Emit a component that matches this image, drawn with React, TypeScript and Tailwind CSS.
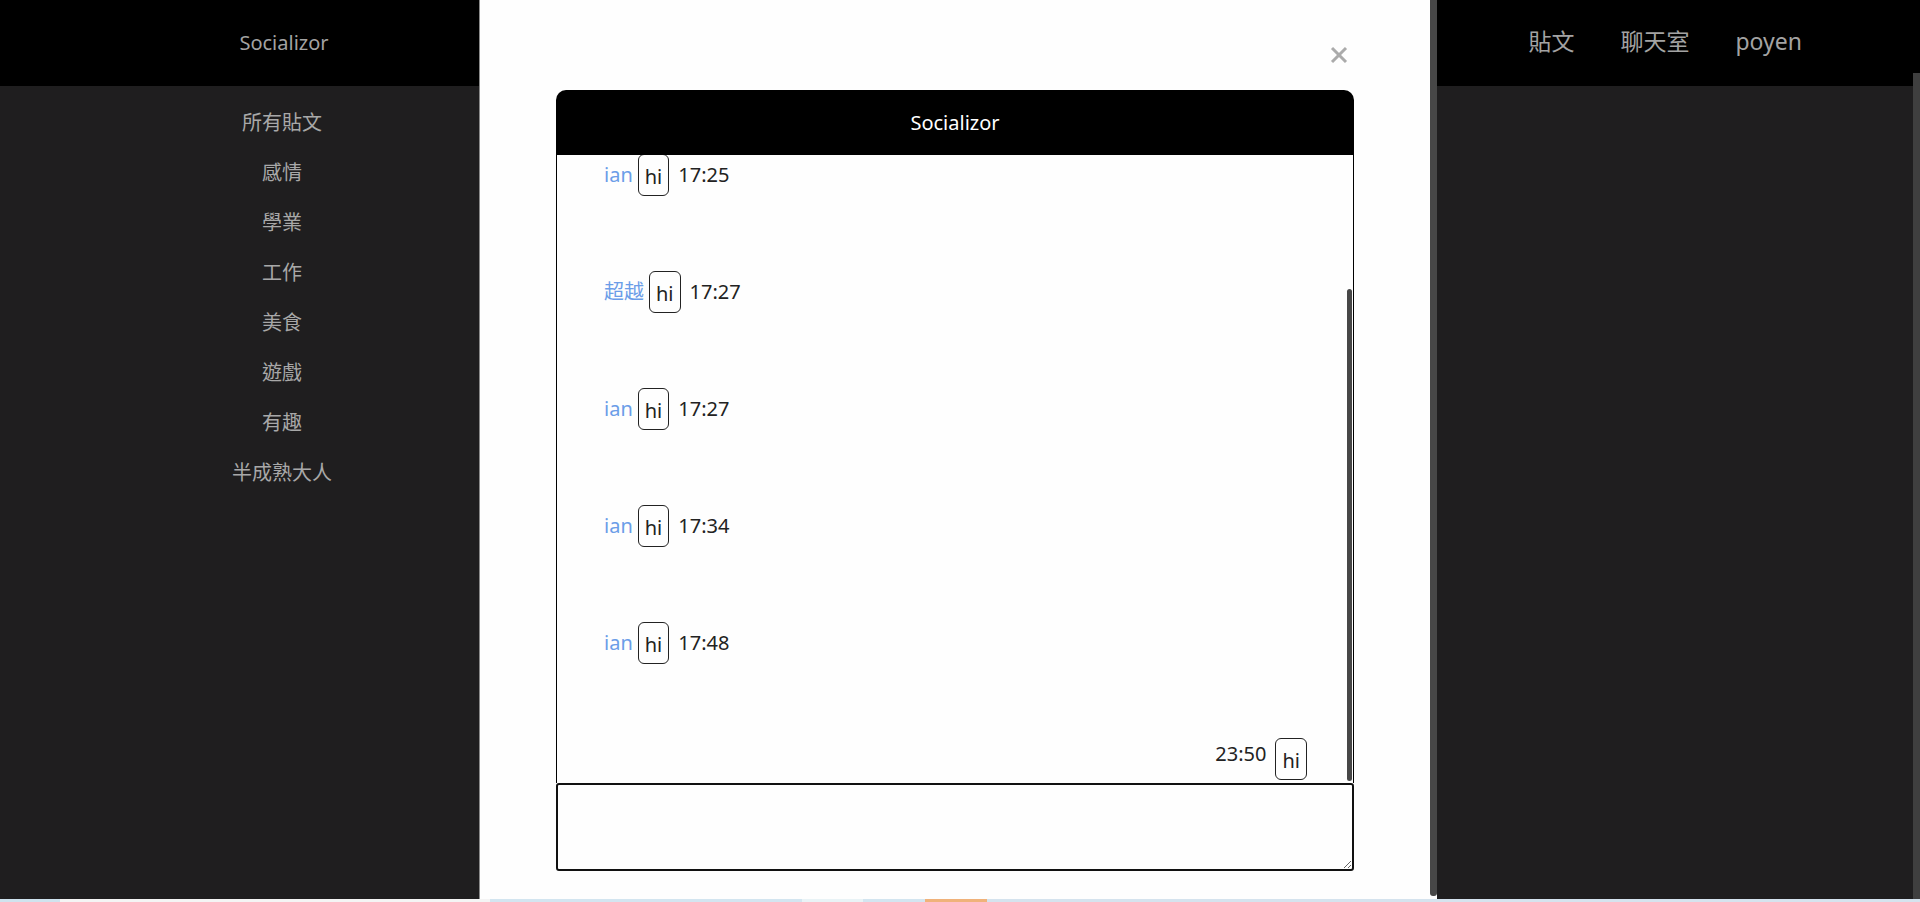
import React from 'react';

const CATEGORIES = ['所有貼文', '感情', '學業', '工作', '美食', '遊戲', '有趣', '半成熟大人'];

const MESSAGES = [
  { id: 1, name: 'ian', text: 'hi', time: '17:25' },
  { id: 2, name: '超越', text: 'hi', time: '17:27' },
  { id: 3, name: 'ian', text: 'hi', time: '17:27' },
  { id: 4, name: 'ian', text: 'hi', time: '17:34' },
  { id: 5, name: 'ian', text: 'hi', time: '17:48' },
];

const FONT = "font-['Noto_Sans','Noto_Sans_CJK_TC',sans-serif]";

const Bubble: React.FC<{ text: string }> = ({ text }) => (
  <div className="h-[42px] px-[6px] flex items-center border border-[#222] rounded-[6px] text-[20px] text-[#222] leading-none pt-[4px]">
    {text}
  </div>
);

const App: React.FC = () => {
  return (
    <div className={`relative w-full h-[902px] overflow-hidden bg-[#1f1e1f] flex flex-col ${FONT}`}>
      {/* top bar */}
      <header className="h-[86px] bg-black flex items-center shrink-0">
        <div className="w-[568px] text-center text-[20px] text-[#a3a3a3]">Socializor</div>
        <nav className="ml-auto pr-[118px] pb-[3px] flex items-center gap-[46px] text-[23px] text-[#a3a3a3]">
          <span>貼文</span>
          <span>聊天室</span>
          <span>poyen</span>
        </nav>
      </header>

      {/* page body */}
      <div className="flex-1 flex">
        <aside className="w-[564px] pt-[12px] flex flex-col items-center text-[20px] text-[#a8a8a8]">
          {CATEGORIES.map((c) => (
            <div key={c} className="h-[50px] flex items-center">{c}</div>
          ))}
        </aside>
      </div>

      {/* taskbar edge */}
      <div className="h-[3px] flex shrink-0">
        <div className="w-[60px] bg-[#cfe3ee]" />
        <div className="w-[430px] bg-[#f4f4f4]" />
        <div className="w-[312px] bg-[#d3e5f0]" />
        <div className="w-[61px] bg-[#e9f3f6]" />
        <div className="w-[62px] bg-[#d3e5f0]" />
        <div className="w-[62px] bg-[#f0b27a]" />
        <div className="flex-1 bg-[#d5e3ee]" />
      </div>

      {/* page scrollbar */}
      <div className="absolute right-0 top-[73px] w-[7px] h-[826px] bg-[#3f3f3f]" />

      {/* chat modal */}
      <div className="absolute left-[479px] top-0 h-[899px] flex border-l border-[#8a8a8a]">
        <div className="relative w-[950px] bg-[#fefefe] px-[76px] pt-[90px]">
          <button className="absolute top-[46px] right-[82px] w-[18px] h-[18px] text-[#ababab]">
            <svg viewBox="0 0 18 18" className="w-full h-full" stroke="currentColor" strokeWidth="3" strokeLinecap="butt">
              <line x1="2" y1="2" x2="16" y2="16" />
              <line x1="16" y1="2" x2="2" y2="16" />
            </svg>
          </button>

          <div className="h-[65px] bg-black rounded-t-[10px] flex items-center justify-center text-white text-[20px]">
            Socializor
          </div>

          <div className="relative h-[628px] border-x border-black overflow-hidden">
            <div className="flex flex-col gap-[75px] -mt-[1px]">
              {MESSAGES.map((m) => (
                <div key={m.id} className="flex items-center pl-[47px] text-[20px]">
                  <span className="text-[#6b9de8] mr-[5px]">{m.name}</span>
                  <Bubble text={m.text} />
                  <span className="ml-[9px] text-[#222]">{m.time}</span>
                </div>
              ))}
              <div className="flex items-center justify-end pr-[46px] text-[20px] -mt-[1px]">
                <span className="mr-[9px] pb-[10px] text-[#222]">23:50</span>
                <Bubble text="hi" />
              </div>
            </div>
            <div className="absolute right-[1px] top-[134px] w-[5px] h-[492px] rounded-full bg-[#474747]" />
          </div>

          <textarea className="block w-full h-[88px] border-2 border-[#111] rounded-[3px] resize-y outline-none px-[3px] text-[16px]" />
        </div>
        <div className="w-[7px] bg-white">
          <div className="h-[896px] bg-[#474747] rounded-b-[3px]" />
        </div>
      </div>
    </div>
  );
};

export default App;
